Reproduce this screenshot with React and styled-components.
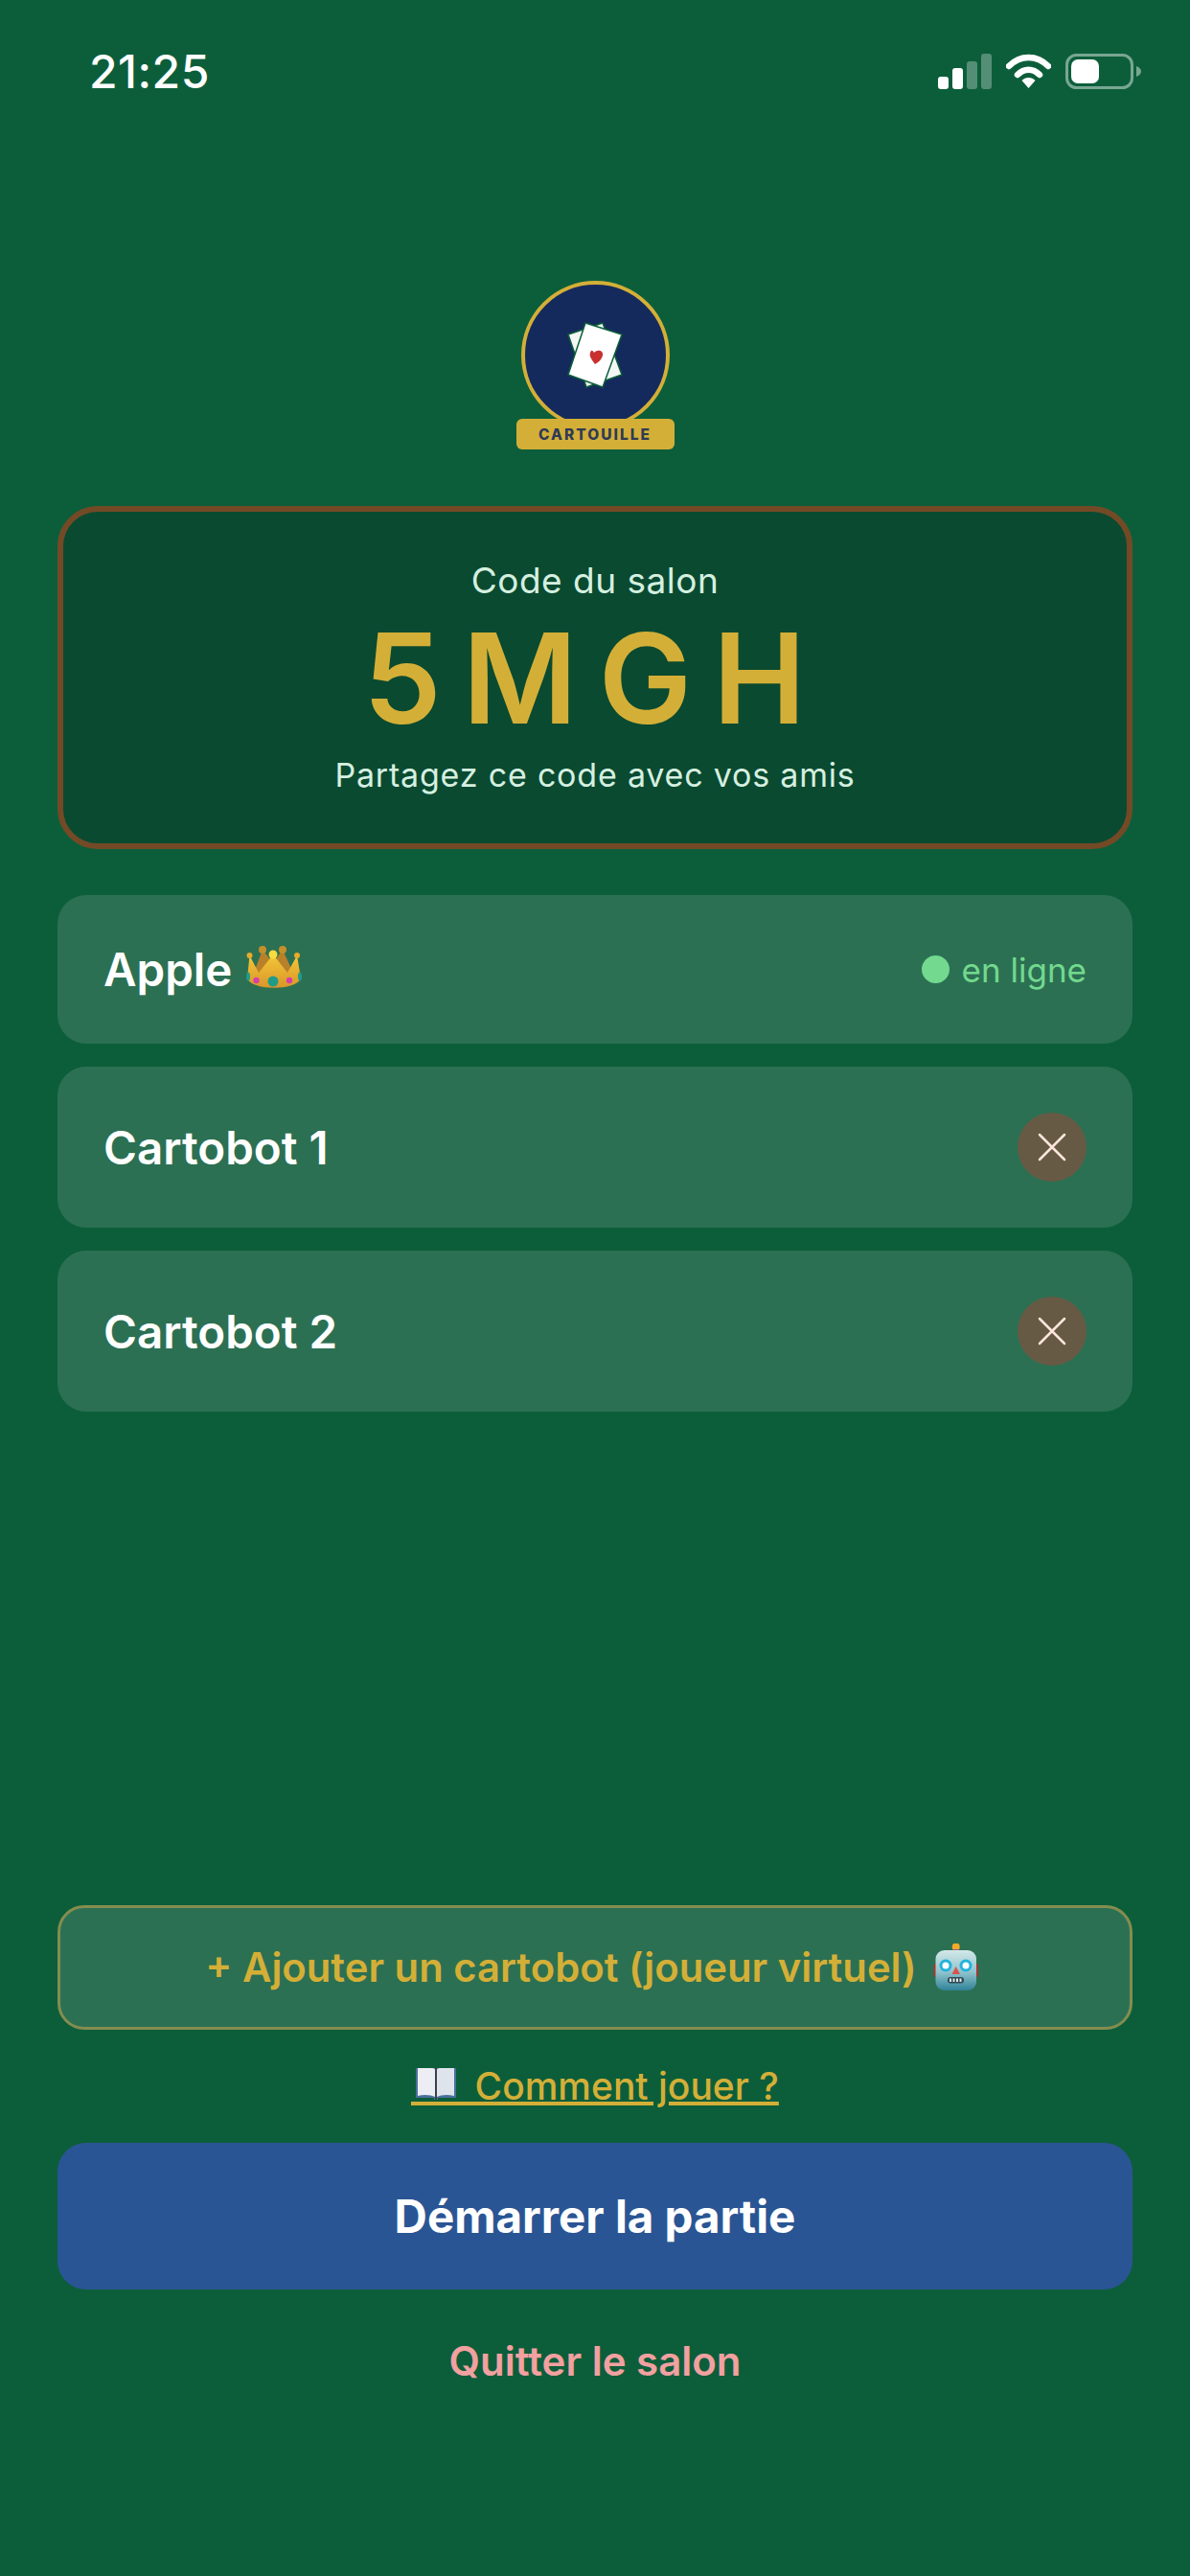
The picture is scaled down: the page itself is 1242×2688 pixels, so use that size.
import React from 'react'
import styled, { createGlobalStyle } from 'styled-components'

const GlobalStyle = createGlobalStyle`
  html, body {
    margin: 0;
    padding: 0;
    background: #0c5e3b;
  }
  * {
    box-sizing: border-box;
  }
`

const Page = styled.div`
  width: 1242px;
  min-height: 2688px;
  padding: 0 60px 199px;
  display: flex;
  flex-direction: column;
  background: #0c5e3b;
  font-family: Inter, "Liberation Sans", sans-serif;
`

const StatusBar = styled.header`
  height: 148px;
  margin: 0 -9px 0 33px;
  display: flex;
  align-items: center;
  justify-content: space-between;
`

const Time = styled.span`
  font-size: 48px;
  font-weight: 500;
  letter-spacing: 0.5px;
  color: #fff;
`

const StatusIcons = styled.div`
  display: flex;
  align-items: center;
  gap: 15px;
`

const Logo = styled.div`
  margin-top: 145px;
  display: flex;
  flex-direction: column;
  align-items: center;
`

const LogoCircle = styled.div`
  width: 155px;
  height: 155px;
  border-radius: 50%;
  border: 4px solid #d4af37;
  background: #152a5c;
  display: flex;
  align-items: center;
  justify-content: center;
`

const LogoBanner = styled.div`
  width: 165px;
  height: 32px;
  margin-top: -11px;
  position: relative;
  border-radius: 6px;
  background: #d4af37;
  color: #2f3a55;
  font-size: 15.5px;
  font-weight: 800;
  letter-spacing: 2px;
  display: flex;
  align-items: center;
  justify-content: center;
`

const CodeCard = styled.section`
  margin-top: 59px;
  height: 358px;
  border: 6px solid #744a26;
  border-radius: 42px;
  background: #0a4a30;
  display: flex;
  flex-direction: column;
  align-items: center;
  justify-content: center;
`

const CodeLabel = styled.div`
  font-size: 37px;
  color: #d5f0e0;
  letter-spacing: 0.5px;
  line-height: 44px;
`

const Code = styled.div`
  font-size: 130px;
  font-weight: 600;
  color: #d4af37;
  letter-spacing: 22px;
  line-height: 159px;
`

const CodeHint = styled.div`
  font-size: 34px;
  color: #d5f0e0;
  letter-spacing: 0.8px;
  line-height: 44px;
`

const Players = styled.div`
  margin-top: 48px;
  display: flex;
  flex-direction: column;
  gap: 24px;
`

const PlayerRow = styled.div`
  padding: 48px;
  border-radius: 30px;
  background: #2c7053;
  display: flex;
  align-items: center;
  justify-content: space-between;
`

const PlayerName = styled.div`
  font-size: 47.5px;
  font-weight: 600;
  line-height: 59px;
  color: #fff;
  display: flex;
  align-items: center;
  gap: 15px;
`

const Online = styled.div`
  display: flex;
  align-items: center;
  gap: 13px;
  font-size: 35px;
  color: #72d98e;
`

const Dot = styled.span`
  width: 29px;
  height: 29px;
  border-radius: 50%;
  background: #72d98e;
`

const CloseButton = styled.button`
  width: 72px;
  height: 72px;
  padding: 0;
  border: none;
  border-radius: 50%;
  background: #675a45;
  display: flex;
  align-items: center;
  justify-content: center;
`

const Footer = styled.div`
  margin-top: auto;
  display: flex;
  flex-direction: column;
  align-items: center;
`

const AddBot = styled.button`
  width: 100%;
  height: 130px;
  padding: 0 5px 0 0;
  border: 3px solid #848d4f;
  border-radius: 28px;
  background: #2c7053;
  color: #d4af37;
  font-family: inherit;
  font-size: 41.8px;
  font-weight: 600;
  display: flex;
  align-items: center;
  justify-content: center;
  gap: 16px;
`

const HowTo = styled.a`
  margin-top: 34px;
  height: 50px;
  position: relative;
  color: #d4af37;
  font-size: 39px;
  font-weight: 500;
  line-height: 50px;
  text-decoration: underline;
  text-decoration-thickness: 4px;
  text-underline-offset: 2px;
  display: inline-flex;
  align-items: center;
  white-space: pre;

  &::before {
    content: '';
    position: absolute;
    left: 0;
    bottom: 5px;
    width: 60px;
    height: 4px;
    background: #d4af37;
  }
`

const StartButton = styled.button`
  width: 100%;
  height: 153px;
  margin-top: 34px;
  border: none;
  border-radius: 30px;
  background: #2a5594;
  color: #fff;
  font-family: inherit;
  font-size: 47.5px;
  font-weight: 700;
`

const QuitButton = styled.button`
  margin-top: 50px;
  padding: 0;
  border: none;
  background: none;
  color: #f2a0a0;
  font-family: inherit;
  font-size: 42px;
  font-weight: 600;
  line-height: 50px;
`

const SignalIcon = () => (
  <svg width="56" height="37" viewBox="0 0 56 37">
    <rect x="0" y="24" width="11" height="13" rx="3" fill="#fff" />
    <rect x="15" y="15" width="11" height="22" rx="3" fill="#fff" />
    <rect x="30" y="8" width="11" height="29" rx="3" fill="#fff" opacity="0.3" />
    <rect x="45" y="0" width="11" height="37" rx="3" fill="#fff" opacity="0.3" />
  </svg>
)

const WifiIcon = () => (
  <svg width="47" height="36" viewBox="0 0 47 36">
    <path d="M3 13C15 1 32 1 44 13" fill="none" stroke="#fff" strokeWidth="6.5" strokeLinecap="round" />
    <path d="M12 22C19 15 28 15 35 22" fill="none" stroke="#fff" strokeWidth="6.5" strokeLinecap="round" />
    <path d="M16.5 28C20 24 27 24 30.5 28L23.5 36Z" fill="#fff" />
  </svg>
)

const BatteryIcon = () => (
  <svg width="79" height="37" viewBox="0 0 79 37">
    <rect x="1.5" y="1.5" width="68" height="34" rx="10" fill="none" stroke="#fff" strokeWidth="3" opacity="0.45" />
    <rect x="6" y="6" width="29" height="25" rx="7" fill="#fff" />
    <path d="M74 13C77 14 79 16 79 18.500C79 21 77 23 74 24Z" fill="#fff" opacity="0.45" />
  </svg>
)

const CardsIcon = () => (
  <svg width="60" height="71" viewBox="-1 -1 60 71">
    <g stroke="#0c5e3b" strokeWidth="1.5" strokeLinejoin="round">
      <path d="M1 13L37 1L57 55L20 68Z" fill="#f2f7f4" />
      <path d="M19 1L57 13L37 68L1 55Z" fill="#fff" />
    </g>
    <path d="M28 32C25 26 23 33 24 36C25 39 27 41 29 44C33 42 36 39 37 35C38 30 32 28 28 32Z" fill="#c92f2f" />
  </svg>
)

const CrownIcon = () => (
  <svg width="58" height="49" viewBox="0 0 58 49">
    <defs>
      <linearGradient id="crownGold" x1="0" y1="0" x2="0" y2="1">
        <stop offset="0" stopColor="#f4c838" />
        <stop offset="1" stopColor="#d9962a" />
      </linearGradient>
    </defs>
    <path d="M8 28L17 4L28 18L38 4L49 28Z" fill="#b9802a" />
    <path d="M3.500 10L13 28L28 9L43 28L53 10L57 34C52 47 6 47 1 34Z" fill="url(#crownGold)" />
    <circle cx="3.500" cy="10" r="3" fill="#e8ab2a" />
    <circle cx="17" cy="4" r="4" fill="#c58f2a" />
    <circle cx="38" cy="4" r="4" fill="#c58f2a" />
    <circle cx="53" cy="10" r="3" fill="#e8ab2a" />
    <circle cx="28" cy="9" r="4.500" fill="#f8dc40" />
    <circle cx="28" cy="37" r="5.500" fill="#1f9c88" />
    <circle cx="10.500" cy="36" r="3.200" fill="#d63fa6" />
    <circle cx="45" cy="36" r="3.200" fill="#d63fa6" />
    <ellipse cx="2" cy="32" rx="2" ry="4.500" fill="#1f9c88" />
    <ellipse cx="56" cy="32" rx="2" ry="4.500" fill="#1f9c88" />
  </svg>
)

const RobotIcon = () => (
  <svg width="50" height="50" viewBox="0 0 50 50">
    <defs>
      <linearGradient id="robotHead" x1="0" y1="0" x2="0" y2="1">
        <stop offset="0" stopColor="#d3e8e8" />
        <stop offset="0.55" stopColor="#8fc3cc" />
        <stop offset="1" stopColor="#2f8298" />
      </linearGradient>
    </defs>
    <circle cx="24.700" cy="3.500" r="4" fill="#f2a92c" />
    <path d="M19 8C21 5.500 28.500 5.500 30.500 8Z" fill="#7a4aa8" />
    <rect x="1.500" y="21" width="5" height="14" rx="2.500" fill="#a8372e" />
    <rect x="43" y="21" width="5" height="14" rx="2.500" fill="#a8372e" />
    <rect x="3.500" y="7" width="42.500" height="42" rx="9" fill="url(#robotHead)" />
    <circle cx="14" cy="23" r="6.500" fill="#24b2dc" />
    <circle cx="14" cy="23" r="3.500" fill="#fff" />
    <circle cx="35" cy="23" r="6.500" fill="#24b2dc" />
    <circle cx="35" cy="23" r="3.500" fill="#fff" />
    <path d="M24.700 24L29 32H20.500Z" fill="#d9534f" />
    <rect x="16" y="35" width="17" height="6.500" rx="3" fill="#2f4a55" />
    <path d="M19 36.500V40M22.500 36.500V40M26 36.500V40M29.500 36.500V40" stroke="#dfe8ea" strokeWidth="2" />
  </svg>
)

const BookIcon = () => (
  <svg width="56" height="38" viewBox="0 3 56 38">
    <path d="M5 3H47V34H28V36H24V34H5Z" fill="#4a6f9c" />
    <path d="M7 3C14 1 21 2 25 4V33C21 31 14 30 7 32Z" fill="#eceef3" />
    <path d="M45 3C38 1 31 2 27 4V33C31 31 38 30 45 32Z" fill="#dfe3ec" />
    <rect x="25" y="3" width="2" height="33" fill="#3c3f4c" />
  </svg>
)

const CloseIcon = () => (
  <svg width="30" height="30" viewBox="0 0 30 30">
    <path d="M2 2L28 28M28 2L2 28" stroke="#fde6dc" strokeWidth="2.500" strokeLinecap="round" />
  </svg>
)

const bots = ['Cartobot 1', 'Cartobot 2']

export default function App() {
  return (
    <Page>
      <GlobalStyle />
      <StatusBar>
        <Time>21:25</Time>
        <StatusIcons>
          <SignalIcon />
          <WifiIcon />
          <BatteryIcon />
        </StatusIcons>
      </StatusBar>

      <Logo>
        <LogoCircle>
          <CardsIcon />
        </LogoCircle>
        <LogoBanner>CARTOUILLE</LogoBanner>
      </Logo>

      <CodeCard>
        <CodeLabel>Code du salon</CodeLabel>
        <Code>5MGH</Code>
        <CodeHint>Partagez ce code avec vos amis</CodeHint>
      </CodeCard>

      <Players>
        <PlayerRow>
          <PlayerName>
            Apple
            <CrownIcon />
          </PlayerName>
          <Online>
            <Dot />
            en ligne
          </Online>
        </PlayerRow>
        {bots.map((name) => (
          <PlayerRow key={name}>
            <PlayerName>{name}</PlayerName>
            <CloseButton>
              <CloseIcon />
            </CloseButton>
          </PlayerRow>
        ))}
      </Players>

      <Footer>
        <AddBot>
          + Ajouter un cartobot (joueur virtuel)
          <RobotIcon />
        </AddBot>
        <HowTo>
          <BookIcon />
          {' Comment jouer ?'}
        </HowTo>
        <StartButton>Démarrer la partie</StartButton>
        <QuitButton>Quitter le salon</QuitButton>
      </Footer>
    </Page>
  )
}
